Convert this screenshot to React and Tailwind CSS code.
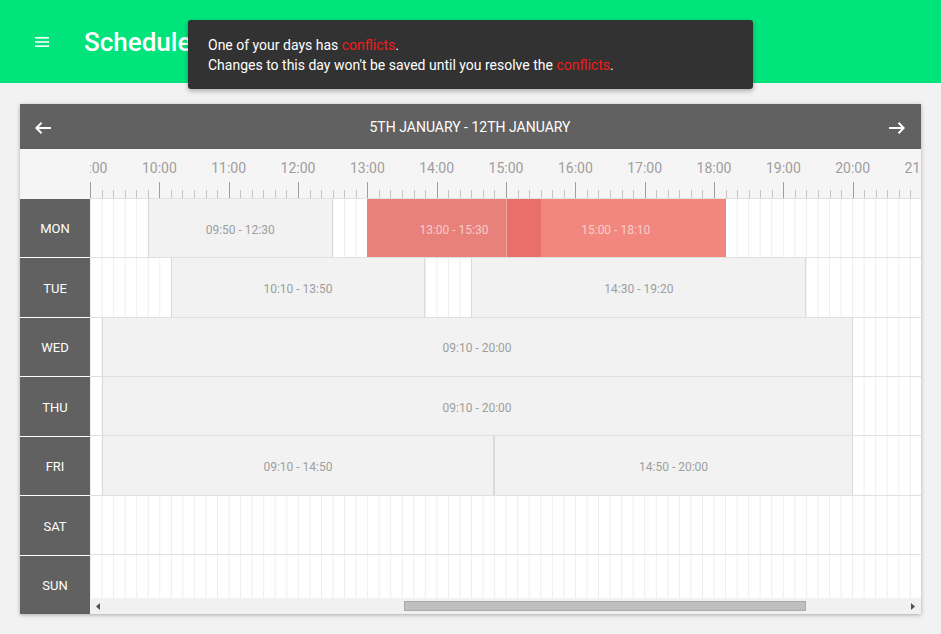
import React from "react";

const HOUR = 69.333;
const pos = (t) => {
  const [h, m] = t.split(":").map(Number);
  return (((h - 9) * 60 + m) / 60) * HOUR;
};

const days = [
  {
    name: "MON",
    events: [
      { from: "09:50", to: "12:30", kind: "gray" },
      { from: "13:00", to: "15:30", kind: "red1" },
      { from: "15:00", to: "18:10", kind: "red2" },
      { from: "15:00", to: "15:30", kind: "overlap" },
    ],
  },
  {
    name: "TUE",
    events: [
      { from: "10:10", to: "13:50", kind: "gray" },
      { from: "14:30", to: "19:20", kind: "gray" },
    ],
  },
  { name: "WED", events: [{ from: "09:10", to: "20:00", kind: "gray" }] },
  { name: "THU", events: [{ from: "09:10", to: "20:00", kind: "gray" }] },
  {
    name: "FRI",
    events: [
      { from: "09:10", to: "14:50", kind: "gray" },
      { from: "14:50", to: "20:00", kind: "gray" },
    ],
  },
  { name: "SAT", events: [] },
  { name: "SUN", events: [] },
];

const kindClass = {
  gray: "bg-[#f2f2f2] border-x border-[#dadada] text-[#9e9e9e]",
  red1: "bg-[#e9817b] text-white/60",
  red2: "bg-[#f1877f] text-white/60",
  overlap: "bg-[#e9706a] border-l border-white/40",
};

const hours = Array.from({ length: 13 }, (_, i) => 9 + i);
const ticks = Array.from({ length: 80 }, (_, i) => i);

const Event = ({ ev }) => {
  const left = pos(ev.from);
  const width = pos(ev.to) - left;
  return (
    <div
      className={`absolute top-0 bottom-0 flex items-center justify-center pt-[3px] text-[12px] ${kindClass[ev.kind]}`}
      style={{ left, width }}
    >
      {ev.kind !== "overlap" && `${ev.from} - ${ev.to}`}
    </div>
  );
};

const Arrow = ({ flip }) => (
  <svg
    width="16"
    height="12"
    viewBox="0 0 16 12"
    fill="none"
    stroke="white"
    strokeWidth="2"
    className={flip ? "rotate-180" : ""}
  >
    <path d="M1 6H16M6.5 0.8L1.3 6L6.5 11.2" />
  </svg>
);

export default function App() {
  return (
    <div className="relative h-[634px] w-full overflow-hidden bg-[#f2f2f2] font-['Roboto',sans-serif]">
      <header className="flex h-[83px] items-center bg-[#00e47b] pl-[35px]">
        <svg width="14" height="10" viewBox="0 0 14 10" fill="white">
          <rect x="0" y="0" width="14" height="1.6" />
          <rect x="0" y="4.2" width="14" height="1.6" />
          <rect x="0" y="8.4" width="14" height="1.6" />
        </svg>
        <h1 className="ml-[35px] pt-[1px] text-[26px] font-medium text-white">Schedule</h1>
      </header>

      <div className="px-[20px] pt-[21px]">
        <div className="flex h-[510px] flex-col bg-white shadow-[0_1px_4px_rgba(0,0,0,0.3)]">
          <div className="flex h-[45px] shrink-0 items-center justify-between bg-[#616161] pl-[15px] pr-[16px] pt-[2px] text-[14px] text-white">
            <button>
              <Arrow />
            </button>
            <span>5TH JANUARY - 12TH JANUARY</span>
            <button>
              <Arrow flip />
            </button>
          </div>

          <div className="flex min-h-0 flex-1">
            <div className="flex w-[70px] shrink-0 flex-col">
              <div className="h-[50px] shrink-0 bg-[#f5f5f5]" />
              {days.map((d, i) => (
                <div
                  key={d.name}
                  className={`flex flex-1 items-center justify-center bg-[#616161] pt-[2px] text-[13px] text-white ${
                    i < days.length - 1 ? "border-b border-white" : ""
                  }`}
                >
                  {d.name}
                </div>
              ))}
            </div>

            <div className="flex min-w-0 flex-1 flex-col">
              <div className="relative h-[50px] shrink-0 overflow-hidden border-b border-[#e0e0e0] bg-[#f5f5f5]">
                {hours.map((h) => (
                  <span
                    key={h}
                    className="absolute top-[9px] -translate-x-1/2 text-[14px] leading-[20px] text-[#9e9e9e]"
                    style={{ left: (h - 9) * HOUR }}
                  >
                    {String(h).padStart(2, "0")}:00
                  </span>
                ))}
                <svg className="absolute bottom-0 left-0" width="880" height="16">
                  {ticks.map((k) => {
                    const x = Math.round((k * HOUR) / 6) + 0.5;
                    const major = k % 6 === 0;
                    return (
                      <line
                        key={k}
                        x1={x}
                        x2={x}
                        y1={major ? 0 : 8}
                        y2={16}
                        stroke={major ? "#9e9e9e" : "#c4c4c4"}
                        strokeWidth="1"
                      />
                    );
                  })}
                </svg>
              </div>

              <div className="flex min-h-0 flex-1 flex-col overflow-hidden">
                {days.map((d, i) => (
                  <div
                    key={d.name}
                    className={`relative shrink-0 border-b border-[#e0e0e0] bg-white bg-[linear-gradient(to_right,#eeeeee_1px,transparent_1px)] bg-[length:11.5555px_100%] ${
                      i === days.length - 1 ? "h-[59px]" : "h-[59.33px]"
                    }`}
                  >
                    {d.events.map((ev, j) => (
                      <Event key={j} ev={ev} />
                    ))}
                  </div>
                ))}
              </div>

              <div className="flex h-[16px] shrink-0 items-center bg-[#f1f1f1]">
                <div className="flex w-[16px] justify-center">
                  <svg width="4" height="7" viewBox="0 0 4 7">
                    <polygon points="4,0 4,7 0,3.5" fill="#505050" />
                  </svg>
                </div>
                <div className="relative h-full flex-1">
                  <div className="absolute left-[298px] top-[3px] h-[10px] w-[402px] border border-[#aaaaaa] bg-[#bfbfbf]" />
                </div>
                <div className="flex w-[16px] justify-center">
                  <svg width="4" height="7" viewBox="0 0 4 7">
                    <polygon points="0,0 0,7 4,3.5" fill="#505050" />
                  </svg>
                </div>
              </div>
            </div>
          </div>
        </div>
      </div>

      <div className="absolute left-[188px] top-[20px] w-[565px] rounded-[3px] bg-[#323232] px-[20px] pb-[14px] pt-[15px] text-[14px] leading-[20px] text-white shadow-[0_2px_5px_rgba(0,0,0,0.3)]">
        <p>
          One of your days has <span className="text-[#f21b1b]">conflicts</span>.
        </p>
        <p>
          Changes to this day won't be saved until you resolve the{" "}
          <span className="text-[#f21b1b]">conflicts</span>.
        </p>
      </div>
    </div>
  );
}
